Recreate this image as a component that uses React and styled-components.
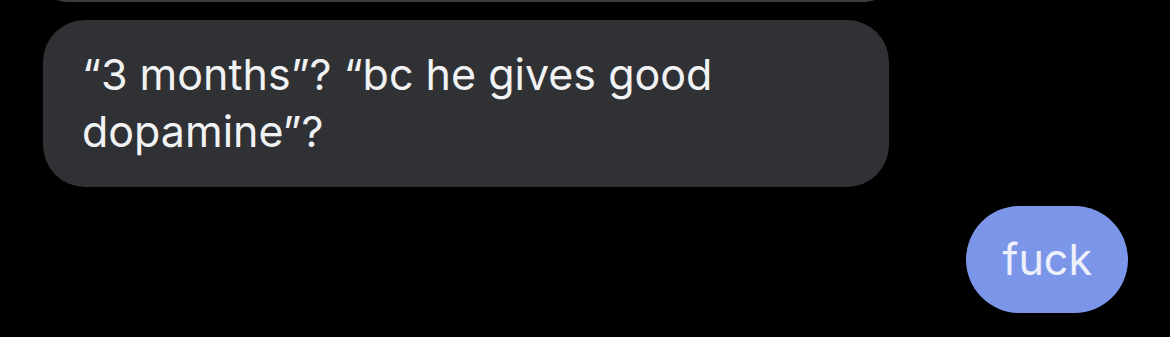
import styled, { createGlobalStyle } from "styled-components";

const GlobalStyle = createGlobalStyle`
  html, body {
    margin: 0;
    padding: 0;
    background: #000;
  }
  body {
    font-family: Inter, "Liberation Sans", Arial, sans-serif;
    -webkit-font-smoothing: antialiased;
  }
`;

const Thread = styled.div`
  width: 1170px;
  height: 337px;
  overflow: hidden;
  background: #000;
  display: flex;
  flex-direction: column;
`;

const Row = styled.div`
  display: flex;
  justify-content: ${(props) => (props.$mine ? "flex-end" : "flex-start")};
  padding: 0 42px 0 43px;
  margin-top: ${(props) => props.$gap || 0}px;
`;

const Bubble = styled.div`
  box-sizing: border-box;
  width: ${(props) => (props.$width ? `${props.$width}px` : "auto")};
  background: ${(props) => (props.$mine ? "#7b96e9" : "#2f3134")};
  color: ${(props) => (props.$mine ? "#eef1fb" : "#f1f2f3")};
  border-radius: ${(props) => (props.$mine ? "54px" : "42px")};
  font-size: 43px;
  line-height: 57px;
  letter-spacing: 0;
  padding: ${(props) => (props.$mine ? "25px 36px 25px" : "26px 39px 27px")};
`;

const Sliver = styled.div`
  height: 48px;
  margin: -46px 0 0 0;
  background: #3a3c3f;
  border-radius: 42px;
  width: 846px;
`;

function App() {
  return (
    <>
      <GlobalStyle />
      <Thread>
        <Row>
          <Sliver />
        </Row>
        <Row $gap={18}>
          <Bubble $width={846}>“3 months”? “bc he gives good dopamine”?</Bubble>
        </Row>
        <Row $mine $gap={19}>
          <Bubble $mine>fuck</Bubble>
        </Row>
      </Thread>
    </>
  );
}

export default App;
